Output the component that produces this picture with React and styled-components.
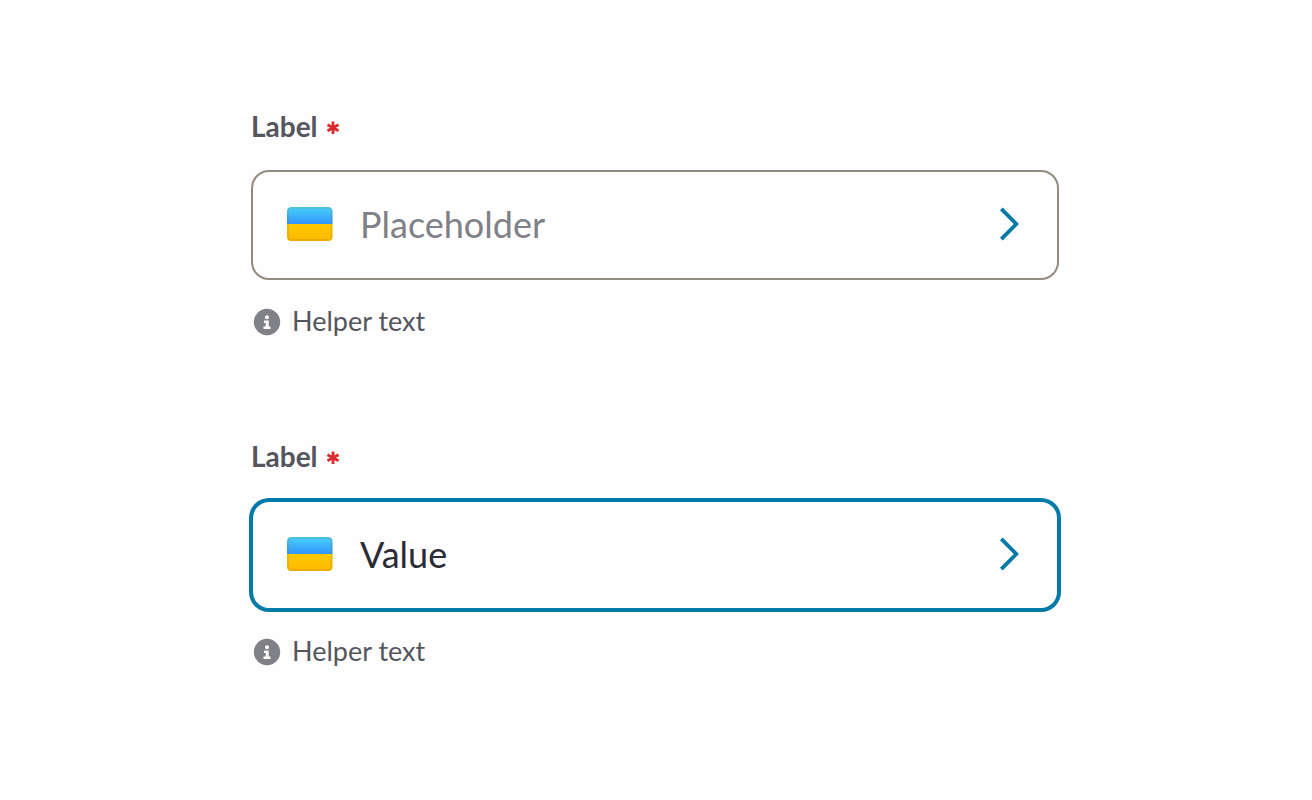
import React, { useId } from "react";
import styled, { createGlobalStyle } from "styled-components";

const GlobalStyle = createGlobalStyle`
  *, *::before, *::after { box-sizing: border-box; }
  body {
    margin: 0;
    background: #fefefe;
    font-family: Lato, "Noto Sans", sans-serif;
  }
`;

const Page = styled.main`
  display: flex;
  flex-direction: column;
  gap: 101px;
  padding: 110px 253px 128px 251px;

  @media (max-width: 900px) {
    padding-left: 24px;
    padding-right: 24px;
  }
`;

const Field = styled.div`
  display: flex;
  flex-direction: column;
`;

const LabelRow = styled.div`
  display: flex;
  align-items: center;
  gap: 8px;
  height: 32px;
  margin-bottom: 28px;
`;

const Label = styled.label`
  color: #55565d;
  font-size: 28px;
  font-weight: 700;
  line-height: 32px;
`;

const Control = styled.button`
  display: flex;
  align-items: center;
  width: 100%;
  height: 110px;
  padding: 0 36px 2px 34px;
  border: 2px solid ${(p) => (p.$active ? "#007aa8" : "#928b81")};
  border-radius: 18px;
  box-shadow: ${(p) => (p.$active ? "0 0 0 2px #007aa8" : "none")};
  background: #fefefe;
  font-family: inherit;
  text-align: left;
  cursor: pointer;
`;

const ControlText = styled.span`
  flex: 1;
  margin-left: 27px;
  color: ${(p) => (p.$filled ? "#2a2b33" : "#808186")};
  font-size: 36px;
  line-height: 44px;
`;

const Helper = styled.div`
  display: flex;
  align-items: center;
  gap: 11px;
  margin-top: 25px;
  padding-left: 2px;
  color: #55565d;
  font-size: 27px;
  line-height: 32px;
`;

const HelperText = styled.span`
  padding-bottom: 2px;
`;

const Icon = styled.svg`
  display: block;
  flex: none;
`;

function Asterisk() {
  return (
    <Icon width="14" height="18" viewBox="0 0 14 18" aria-hidden="true">
      <path
        d="M7 4.500V17M1.500 7.700L12.500 13.800M12.500 7.700L1.500 13.800"
        fill="none"
        stroke="#da2a2e"
        strokeWidth="2.800"
      />
    </Icon>
  );
}

function Flag() {
  const id = useId();
  return (
    <Icon width="46" height="34" viewBox="0 0 46 34" aria-hidden="true">
      <defs>
        <linearGradient id={`${id}b`} x1="0" y1="0" x2="0" y2="1">
          <stop offset="0" stopColor="#48d2fa" />
          <stop offset="1" stopColor="#3294fb" />
        </linearGradient>
        <linearGradient id={`${id}y`} x1="0" y1="0" x2="0" y2="1">
          <stop offset="0" stopColor="#ffc900" />
          <stop offset="1" stopColor="#ffb800" />
        </linearGradient>
      </defs>
      <path d="M0 17V4.500Q0 0 4.500 0H41Q45.500 0 45.500 4.500V17Z" fill={`url(#${id}b)`} />
      <path d="M0 17H45.500V29.500Q45.500 34 41 34H4.500Q0 34 0 29.500Z" fill={`url(#${id}y)`} />
      <rect
        x="1"
        y="1"
        width="43.500"
        height="32"
        rx="3.500"
        fill="none"
        stroke="#806c00"
        strokeOpacity="0.15"
        strokeWidth="2"
      />
    </Icon>
  );
}

function Chevron() {
  return (
    <Icon width="22" height="34" viewBox="0 0 22 34" aria-hidden="true">
      <path d="M2.300 1.800L17.300 17L2.300 32.200" fill="none" stroke="#007aa8" strokeWidth="3.800" />
    </Icon>
  );
}

function Info() {
  return (
    <Icon width="28" height="28" viewBox="0 0 28 28" aria-hidden="true">
      <circle cx="14" cy="14" r="13.200" fill="#808186" />
      <circle cx="14" cy="9.200" r="2" fill="#fefefe" />
      <path d="M11 12.600H15.700V18.500H17.500V20.900H10.500V18.500H12.700V14.900H11Z" fill="#fefefe" />
    </Icon>
  );
}

function PickerField({ label, text, filled, active, helper }) {
  const id = useId();
  return (
    <Field>
      <LabelRow>
        <Label htmlFor={id}>{label}</Label>
        <Asterisk />
      </LabelRow>
      <Control
        id={id}
        type="button"
        aria-haspopup="dialog"
        aria-describedby={`${id}-helper`}
        $active={active}
      >
        <Flag />
        <ControlText $filled={filled}>{text}</ControlText>
        <Chevron />
      </Control>
      <Helper id={`${id}-helper`}>
        <Info />
        <HelperText>{helper}</HelperText>
      </Helper>
    </Field>
  );
}

export default function App() {
  return (
    <>
      <GlobalStyle />
      <Page>
        <PickerField label="Label" text="Placeholder" helper="Helper text" />
        <PickerField label="Label" text="Value" helper="Helper text" filled active />
      </Page>
    </>
  );
}
